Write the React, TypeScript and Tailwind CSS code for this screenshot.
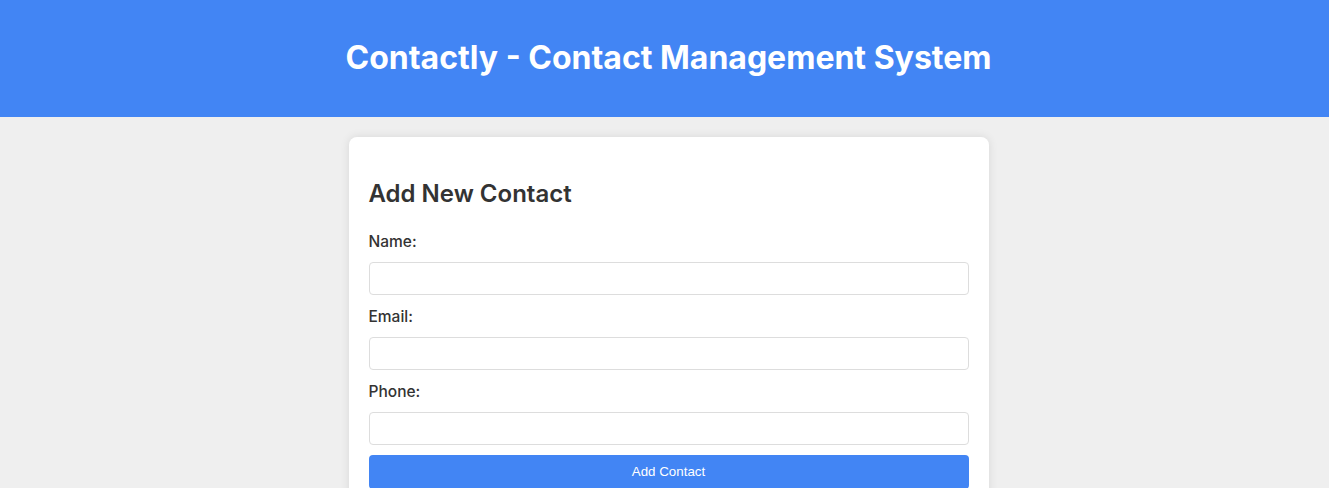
export default function App() {
  return (
    <div className="min-h-[488px] bg-[#efefef] pl-2" style={{ fontFamily: "Inter, 'Noto Sans', sans-serif" }}>
      <header className="h-[117px] bg-[#4285f4] flex items-center justify-center -ml-2 pl-2">
        <h1 className="text-[32px] font-bold text-white -mt-[1px]">Contactly - Contact Management System</h1>
      </header>
      <main className="flex justify-center pt-5">
        <div className="w-[640px] bg-white rounded-lg shadow-[0_0_10px_rgba(0,0,0,0.1)] px-5 pt-5 pb-5">
          <h2 className="mt-[21px] mb-5 text-[24px] leading-8 font-semibold text-[#333]">Add New Contact</h2>
          <form className="flex flex-col">
            <label className="block mb-2 text-[15.5px] leading-6 font-medium text-[#333]">Name:</label>
            <input className="h-[33px] mb-[10px] border border-[#ddd] rounded-[4px] px-2" />
            <label className="block mb-2 text-[15.5px] leading-6 font-medium text-[#333]">Email:</label>
            <input className="h-[33px] mb-[10px] border border-[#ddd] rounded-[4px] px-2" />
            <label className="block mb-2 text-[15.5px] leading-6 font-medium text-[#333]">Phone:</label>
            <input className="h-[33px] mb-[10px] border border-[#ddd] rounded-[4px] px-2" />
            <button type="button" className="h-[34px] bg-[#4285f4] text-white text-[13.33px] rounded-[4px]" style={{ fontFamily: "'Liberation Sans', Arial, sans-serif" }}>Add Contact</button>
          </form>
        </div>
      </main>
    </div>
  );
}
